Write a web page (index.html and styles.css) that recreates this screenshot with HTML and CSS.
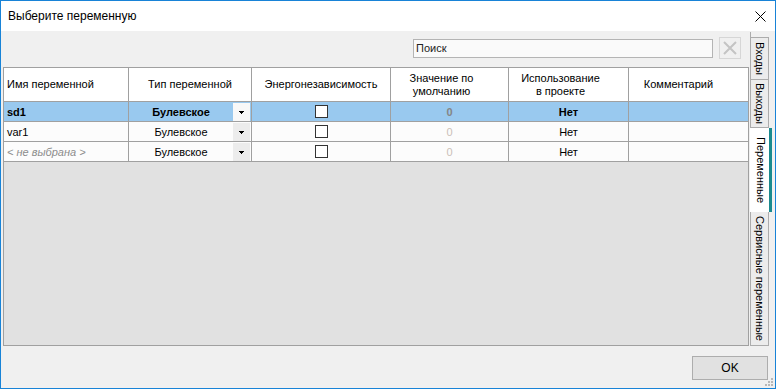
FILE: index.html
```html
<!DOCTYPE html>
<html lang="ru">
<head>
<meta charset="utf-8">
<title>Выберите переменную</title>
<link rel="stylesheet" href="styles.css">
</head>
<body>
<div class="window">
  <div class="titlebar">
    <span class="title">Выберите переменную</span>
    <svg class="close" width="11" height="11" viewBox="0 0 11 11"><path d="M0.5 0.5 L10.5 10.5 M10.5 0.5 L0.5 10.5" stroke="#000" stroke-width="1" fill="none"/></svg>
  </div>
  <div class="main">
    <div class="page">
      <div class="searchrow">
        <div class="search">Поиск</div>
        <div class="clear"><svg width="14" height="14" viewBox="0 0 14 14"><path d="M1 1 L13 13 M13 1 L1 13" stroke="#c4c4c4" stroke-width="2" fill="none"/></svg></div>
      </div>
      <div class="grid">
        <div class="row head">
          <div class="cell c-name">Имя переменной</div>
          <div class="cell">Тип переменной</div>
          <div class="cell">Энергонезависимость</div>
          <div class="cell c-val">Значение по<br>умолчанию</div>
          <div class="cell c-use">Использование<br>в проекте</div>
          <div class="cell c-com">Комментарий</div>
        </div>
        <div class="row sel">
          <div class="cell c-name">sd1</div>
          <div class="cell c-type"><span class="tt">Булевское</span><span class="dd white"><svg width="5" height="3" viewBox="0 0 5 3" shape-rendering="crispEdges"><rect x="0" y="0" width="5" height="1"/><rect x="1" y="1" width="3" height="1"/><rect x="2" y="2" width="1" height="1"/></svg></span></div>
          <div class="cell"><span class="cb"></span></div>
          <div class="cell zero zb">0</div>
          <div class="cell">Нет</div>
          <div class="cell"></div>
        </div>
        <div class="row">
          <div class="cell c-name">var1</div>
          <div class="cell c-type"><span class="tt">Булевское</span><span class="dd"><svg width="5" height="3" viewBox="0 0 5 3" shape-rendering="crispEdges"><rect x="0" y="0" width="5" height="1"/><rect x="1" y="1" width="3" height="1"/><rect x="2" y="2" width="1" height="1"/></svg></span></div>
          <div class="cell"><span class="cb"></span></div>
          <div class="cell zero">0</div>
          <div class="cell">Нет</div>
          <div class="cell"></div>
        </div>
        <div class="row">
          <div class="cell c-name none">&lt; не выбрана &gt;</div>
          <div class="cell c-type"><span class="tt">Булевское</span><span class="dd"><svg width="5" height="3" viewBox="0 0 5 3" shape-rendering="crispEdges"><rect x="0" y="0" width="5" height="1"/><rect x="1" y="1" width="3" height="1"/><rect x="2" y="2" width="1" height="1"/></svg></span></div>
          <div class="cell"><span class="cb"></span></div>
          <div class="cell zero">0</div>
          <div class="cell">Нет</div>
          <div class="cell"></div>
        </div>
      </div>
    </div>
    <div class="tabs">
      <div class="tab t-in">Входы</div>
      <div class="tab t-out">Выходы</div>
      <div class="tab t-var active">Переменные</div>
      <div class="tab t-srv">Сервисные переменные</div>
    </div>
  </div>
  <div class="footer">
    <button class="ok">OK</button>
  </div>
  <svg class="grip" width="9" height="9" viewBox="0 0 9 9" shape-rendering="crispEdges" fill="#b8b8b8"><rect x="6" y="0" width="2" height="2"/><rect x="3" y="3" width="2" height="2"/><rect x="6" y="3" width="2" height="2"/><rect x="0" y="6" width="2" height="2"/><rect x="3" y="6" width="2" height="2"/><rect x="6" y="6" width="2" height="2"/></svg>
</div>
</body>
</html>
```

FILE: styles.css
```css
html, body {
  margin: 0;
  padding: 0;
  background: #f0f0f0;
}

.window {
  position: relative;
  width: 776px;
  height: 389px;
  box-sizing: border-box;
  border: 1px solid #1883d7;
  background: #f0f0f0;
  display: flex;
  flex-direction: column;
  font-family: "Liberation Sans", Arial, sans-serif;
  font-size: 11px;
  color: #000;
  overflow: hidden;
}

.titlebar {
  flex: none;
  height: 30px;
  background: #fff;
  display: flex;
  align-items: center;
}

.title {
  font-size: 12px;
  margin-left: 7px;
  color: #000;
}

.close {
  margin-left: auto;
  margin-right: 9px;
  display: block;
}

.main {
  flex: none;
  height: 315px;
  display: flex;
}

.page {
  width: 749px;
  display: flex;
  flex-direction: column;
}

.searchrow {
  height: 36px;
  box-sizing: border-box;
  display: flex;
  justify-content: flex-end;
  align-items: flex-start;
  padding-right: 9px;
}

.search {
  width: 300px;
  height: 19px;
  box-sizing: border-box;
  border: 1px solid #b4b4b4;
  background: #fafafa;
  margin-top: 8px;
  padding-left: 2px;
  line-height: 17px;
  color: #222;
}

.clear {
  width: 22px;
  height: 22px;
  box-sizing: border-box;
  border: 1px solid #d6d6d6;
  margin-top: 6px;
  margin-left: 6px;
  display: flex;
  align-items: center;
  justify-content: center;
}

.clear svg { display: block; }

.grid {
  margin-left: 2px;
  width: 746px;
  height: 279px;
  box-sizing: border-box;
  border: 1px solid #a0a0a0;
  background: #e1e1e1;
}

.row {
  display: grid;
  grid-template-columns: 125px 123px 139px 118px 120px 119px;
  height: 20px;
}

.row.head {
  height: 34px;
}

.cell {
  box-sizing: border-box;
  border-right: 1px solid #a0a0a0;
  border-bottom: 1px solid #a0a0a0;
  background: #fcfcfc;
  display: flex;
  align-items: center;
  justify-content: center;
  white-space: nowrap;
  overflow: hidden;
}

.cell:last-child {
  border-right: none;
}

.head .cell {
  background: #fff;
  text-align: center;
  line-height: 13px;
}

.head .c-name {
  justify-content: flex-start;
  padding-left: 9px;
}

.head .c-val { padding-right: 16px; }
.head .c-use { padding-right: 16px; }
.head .c-com { padding-right: 20px; }

.row .c-name {
  justify-content: flex-start;
  padding-left: 3px;
}

.sel .cell {
  background: #99c9ef;
  font-weight: bold;
}

.none {
  font-style: italic;
  color: #8c8c8c;
}

.c-type {
  justify-content: space-between;
}

.tt {
  flex: 1;
  text-align: center;
}

.dd {
  width: 17px;
  height: 18px;
  align-self: flex-end;
  margin-right: 1px;
  background: #ececec;
  display: flex;
  align-items: center;
  justify-content: center;
}

.dd.white { background: #f8f8f8; }

.dd svg { display: block; }

.cb {
  width: 13px;
  height: 13px;
  box-sizing: border-box;
  border: 1px solid #333;
  background: #fff;
}

.zero { color: #cbbfb8; }
.sel .zero.zb { color: #858585; }

.tabs {
  width: 25px;
  margin-top: 1px;
  padding-top: 5px;
  box-sizing: border-box;
  border-left: 1px solid #acacac;
  display: flex;
  flex-direction: column;
  align-items: flex-start;
}

.tab {
  writing-mode: vertical-rl;
  width: 18px;
  box-sizing: border-box;
  border: 1px solid #acacac;
  border-left: none;
  background: #ececec;
  display: flex;
  align-items: center;
  justify-content: center;
  font-size: 11px;
  white-space: nowrap;
}

.t-in { height: 43px; }
.t-out { height: 48px; border-top: none; }
.t-var { height: 84px; }
.t-srv { height: 134px; border-top: none; }

.tab.active {
  width: 22px;
  margin-left: -1px;
  background: #fff;
  border: none;
  border-right: 3px solid #1b8a8f;
  padding-left: 3px;
}

.footer {
  flex: 1;
  display: flex;
  justify-content: flex-end;
  align-items: flex-start;
  padding-right: 7px;
}

.ok {
  margin-top: 10px;
  width: 76px;
  height: 24px;
  box-sizing: border-box;
  border: 1px solid #adadad;
  background: #e1e1e1;
  font-family: "Liberation Sans", Arial, sans-serif;
  font-size: 12px;
  color: #000;
  padding: 0;
}

.grip {
  position: absolute;
  right: 1px;
  bottom: 1px;
  display: block;
}
```
